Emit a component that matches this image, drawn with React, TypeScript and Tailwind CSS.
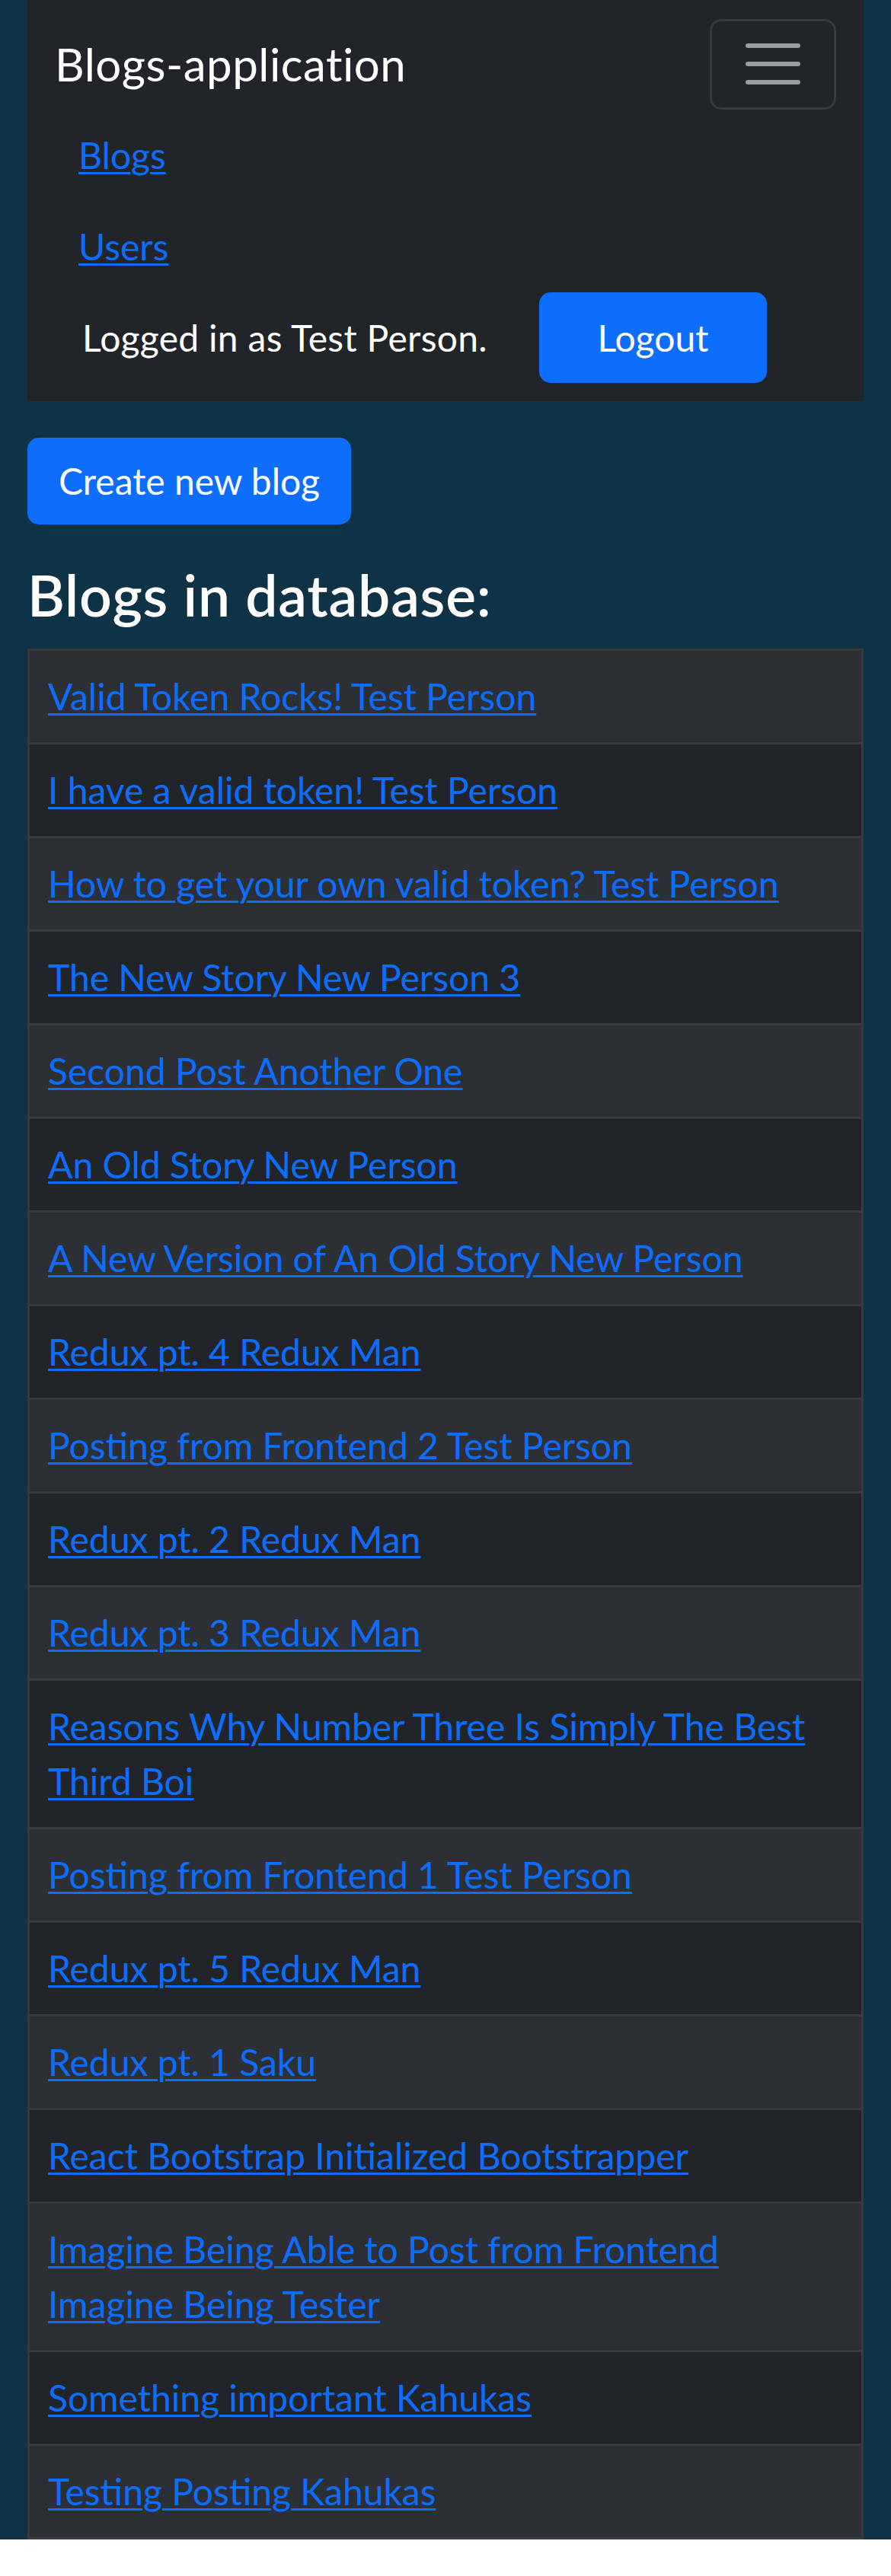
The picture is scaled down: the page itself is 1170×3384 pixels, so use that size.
import React from "react";

const blogs: string[] = [
  "Valid Token Rocks! Test Person",
  "I have a valid token! Test Person",
  "How to get your own valid token? Test Person",
  "The New Story New Person 3",
  "Second Post Another One",
  "An Old Story New Person",
  "A New Version of An Old Story New Person",
  "Redux pt. 4 Redux Man",
  "Posting from Frontend 2 Test Person",
  "Redux pt. 2 Redux Man",
  "Redux pt. 3 Redux Man",
  "Reasons Why Number Three Is Simply The Best Third Boi",
  "Posting from Frontend 1 Test Person",
  "Redux pt. 5 Redux Man",
  "Redux pt. 1 Saku",
  "React Bootstrap Initialized Bootstrapper",
  "Imagine Being Able to Post from Frontend Imagine Being Tester",
  "Something important Kahukas",
  "Testing Posting Kahukas",
];

export default function App() {
  return (
    <div className="bg-[#0e3346] px-[36px] font-['Lato',sans-serif] text-white">
      <nav className="bg-[#212529] px-[36px] py-[24px]">
        <div className="flex h-[120px] items-center justify-between">
          <span className="py-[15px] text-[60px] leading-[90px] tracking-[0.5px]">Blogs-application</span>
          <button className="flex h-[119px] w-[166px] flex-col items-center justify-center gap-[18px] rounded-[15px] border-[3px] border-[#383b3e]">
            <span className="block h-[6px] w-[72px] rounded-full bg-[#9a9c9e]" />
            <span className="block h-[6px] w-[72px] rounded-full bg-[#9a9c9e]" />
            <span className="block h-[6px] w-[72px] rounded-full bg-[#9a9c9e]" />
          </button>
        </div>
        <div className="flex flex-col items-start">
          <a href="#" className="block py-[24px] pl-[31px] text-[48px] leading-[72px] text-[#0d6efd] underline decoration-[3px] underline-offset-[4px]">
            Blogs
          </a>
          <a href="#" className="block py-[24px] pl-[31px] text-[48px] leading-[72px] text-[#0d6efd] underline decoration-[3px] underline-offset-[4px]">
            Users
          </a>
          <div className="flex h-[119px] items-center">
            <span className="ml-[36px] w-[600px] text-[48px] leading-[72px] tracking-[0.3px]">Logged in as Test Person.</span>
            <button className="h-[119px] w-[299px] rounded-[15px] bg-[#0d6efd] text-[48px] leading-[72px] text-white">
              Logout
            </button>
          </div>
        </div>
      </nav>

      <button className="mt-[48px] h-[114px] w-[425px] rounded-[15px] bg-[#0d6efd] text-[48px] leading-[72px] text-white">
        Create new blog
      </button>

      <h2 className="mt-[48px] mb-[26px] text-[75px] font-semibold leading-[89px] tracking-[0.8px]">Blogs in database:</h2>

      <div className="border-x-[3px] border-t-[3px] border-[#373b3e]">
        {blogs.map((b, i) => (
          <div
            key={i}
            className={`border-b-[3px] border-[#373b3e] px-[24px] py-[24px] ${i % 2 === 0 ? "bg-[#2c3034]" : "bg-[#212529]"}`}
          >
            <a
              href="#"
              className="text-[48px] leading-[72px] text-[#0d6efd] underline decoration-[3px] underline-offset-[4px]"
            >
              {b}
            </a>
          </div>
        ))}
      </div>
    </div>
  );
}
